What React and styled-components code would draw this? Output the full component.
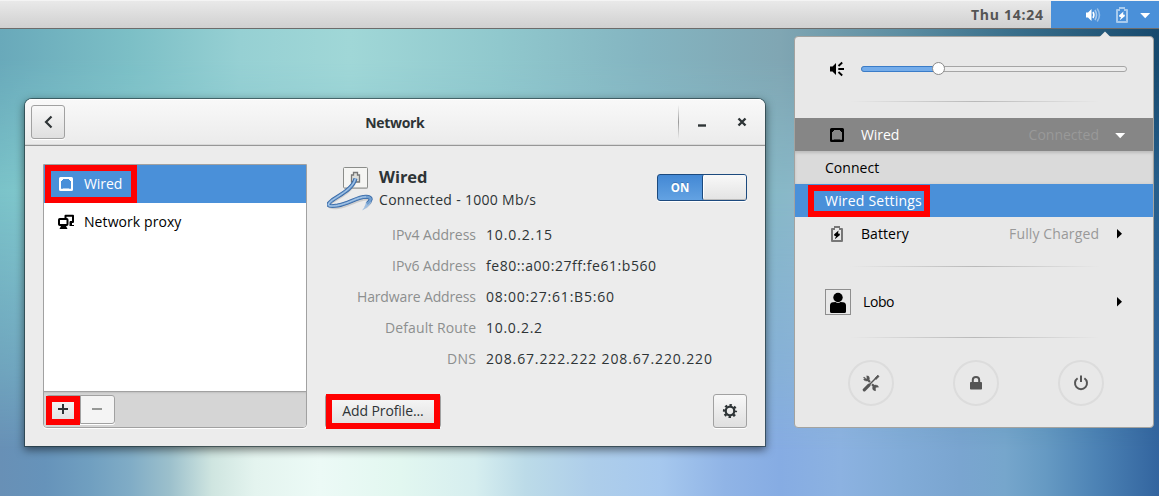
import React from "react";
import styled, { createGlobalStyle, css } from "styled-components";

const Global = createGlobalStyle`
  * { box-sizing: border-box; }
  html, body { margin: 0; padding: 0; background: #fff; }
  body { overflow: hidden; }
  svg { display: block; flex: none; }
`;

const Desktop = styled.div`
  position: relative;
  width: 1159px;
  height: 496px;
  overflow: hidden;
  font-family: "Open Sans", "Noto Sans", sans-serif;
  font-size: 14px;
  line-height: 20px;
  color: #000;
  background: linear-gradient(90deg, #6890b6 0, #6693ba 45px, #709fc0 90px, #80acc6 130px, #9cc0cc 170px,
    #cfe5e0 212px, #e4f4ef 255px, #ecfaf6 320px, #e2f7f0 400px, #d6eeef 475px, #bcdbe8 525px, #aeceea 590px,
    #a6c8ee 660px, #90b4e6 725px, #86ace3 780px, #8cb2e1 840px, #82acd8 900px, #7aa5d0 960px,
    #76a6cc 1005px, #669ac3 1045px, #4d83b5 1095px, #33659f 1158px);
`;

const Wash = styled.div`
  position: absolute;
  inset: 0;
  background: linear-gradient(90deg, ${(p) => p.$stops});
  mask-image: linear-gradient(180deg, ${(p) => p.$fade});
`;

const Text = styled.span`
  white-space: nowrap;
  letter-spacing: ${(p) => p.$ls || 0}px;
  margin-right: ${(p) => -(p.$ls || 0)}px;
`;

/* top bar */
const TopBar = styled.header`
  position: relative;
  display: flex;
  justify-content: flex-end;
  height: 29px;
  border-top: 1px solid #f4f4f4;
  border-bottom: 1px solid #6d6c6b;
  background: linear-gradient(#e9e9e9, #d0d0d0);
`;
const Clock = styled.div`
  padding: 4px 8px 0 0;
  font-weight: 700;
  color: #555;
`;
const Tray = styled.div`
  display: flex;
  align-items: center;
  width: 108px;
  height: 27px;
  padding-left: 34px;
  gap: 13px;
  background: #4a90d9;
  svg:last-child {
    margin-left: -6px;
  }
`;

/* system menu */
const Menu = styled.section`
  position: absolute;
  left: 794px;
  top: 36px;
  width: 360px;
  height: 392px;
  border: 1px solid #a3a3a0;
  border-radius: 4px;
  background: #e8e8e8;
`;
const Pointer = styled.svg`
  position: absolute;
  left: 304px;
  top: -6px;
`;
const VolumeRow = styled.div`
  display: flex;
  align-items: center;
  gap: 16px;
  height: 64px;
  padding: 0 26px 0 34px;
`;
const Track = styled.div`
  position: relative;
  flex: 1;
  height: 6px;
  margin-top: -1px;
  border: 1px solid #a5a5a5;
  border-radius: 3px;
  background: #ececec;
`;
const Fill = styled.div`
  width: 77px;
  height: 6px;
  margin: -1px 0 0 -1px;
  border: 1px solid #3a7cc8;
  border-radius: 3px 0 0 3px;
  background: #74acea;
`;
const Knob = styled.div`
  position: absolute;
  left: 70px;
  top: -5px;
  width: 13px;
  height: 13px;
  border: 1px solid #8a8a8a;
  border-radius: 50%;
  background: #fff;
`;
const Separator = styled.div`
  width: 250px;
  height: 1px;
  margin: ${(p) => p.$m || "0"} auto;
  position: relative;
  left: 1px;
  background: linear-gradient(90deg, rgba(185, 185, 185, 0), #b9b9b9 50%, rgba(185, 185, 185, 0));
`;
const MenuRow = styled.div`
  display: flex;
  align-items: center;
  gap: 16px;
  height: ${(p) => p.$h || 33}px;
  padding: 0 25px 0 34px;
  ${(p) => p.$open && css`color: #fff; background: #868686;`}
`;
const Status = styled.div`
  margin-left: auto;
  margin-right: -3px;
  color: #999;
`;
const SubRow = styled.div`
  position: relative;
  display: flex;
  align-items: center;
  height: 33px;
  padding-left: 30px;
  background: ${(p) => (p.$active ? "#4a90d9" : "#dadada")};
  color: ${(p) => (p.$active ? "#fff" : "#000")};
  box-shadow: ${(p) => (p.$active ? "none" : "inset 0 3px 3px -1px #bdbdbd, inset 0 0 3px #c6c6c6")};
`;
const Avatar = styled.div`
  display: flex;
  width: 26px;
  height: 26px;
  margin: 0 -4px 0 -4px;
  border: 1px solid #8e8e8e;
  align-items: flex-end;
  justify-content: center;
`;
const Actions = styled.div`
  display: flex;
  justify-content: space-between;
  padding: 22px 49px 0 53px;
`;
const Round = styled.div`
  display: flex;
  align-items: center;
  justify-content: center;
  width: 46px;
  height: 46px;
  border: 2px solid #dcdcdc;
  border-radius: 50%;
`;

/* network window */
const Window = styled.main`
  position: absolute;
  left: 24px;
  top: 98px;
  width: 742px;
  height: 349px;
  border: 1px solid rgba(30, 50, 55, 0.6);
  border-radius: 8px 8px 0 0;
  background: #ececec;
  background-clip: padding-box;
  box-shadow: 0 3px 9px rgba(0, 0, 0, 0.5);
  color: #2e3436;
`;
const TitleBar = styled.div`
  display: grid;
  grid-template-columns: 1fr auto 1fr;
  align-items: center;
  height: 47px;
  padding: 0 6px;
  border-bottom: 1px solid #979797;
  border-radius: 7px 7px 0 0;
  background: linear-gradient(#f9f9f9, #ebebeb);
  box-shadow: inset 0 -1px #d9d9d9, inset 0 1px #fff;
`;
const Title = styled.h1`
  margin: 2px 0 0;
  font-size: 14px;
  line-height: 20px;
`;
const Controls = styled.div`
  display: flex;
  justify-content: flex-end;
  align-items: center;
  height: 34px;
`;
const Rule = styled.div`
  width: 1px;
  height: 34px;
  background: linear-gradient(rgba(150, 150, 150, 0), #999 50%, rgba(150, 150, 150, 0));
`;
const Button = styled.div`
  position: relative;
  display: flex;
  align-items: center;
  justify-content: center;
  width: ${(p) => p.$w || 34}px;
  height: ${(p) => p.$h || 34}px;
  border: 1px solid #a1a1a1;
  border-radius: ${(p) => p.$r || "3px"};
  background: ${(p) => (p.$off ? "#f4f4f4" : "linear-gradient(#f8f8f8, #dfdfdf)")};
  box-shadow: 0 1px #fff;
`;
const Body = styled.div`
  display: flex;
  gap: 20px;
  padding: 18px;
  height: 300px;
`;
const Sidebar = styled.div`
  display: flex;
  flex-direction: column;
  width: 264px;
  height: 264px;
  border: 1px solid #a1a1a1;
  border-radius: 0 0 4px 4px;
  background: #fff;
  box-shadow: 0 1px #fff;
  color: #000;
`;
const Device = styled.div`
  position: relative;
  display: flex;
  align-items: center;
  gap: 10px;
  height: 38px;
  padding-left: 14px;
  ${(p) => p.$active && css`color: #fff; background: #4a90d9;`}
`;
const ListTools = styled.div`
  position: relative;
  display: flex;
  margin-top: auto;
  height: 36px;
  padding: 3px 0 0 2px;
  border-top: 1px solid #a1a1a1;
  border-radius: 0 0 3px 3px;
  background: #d5d5d5;
  box-shadow: inset 0 2px 2px -1px #c0c0c0;
  ${Button} + ${Button} {
    margin-left: -1px;
  }
  ${Button} svg {
    margin: 0 1px 2px 0;
  }
`;
const Detail = styled.div`
  display: flex;
  flex-direction: column;
  flex: 1;
  height: 264px;
`;
const DeviceHead = styled.div`
  display: flex;
  height: 61px;
`;
const HeadText = styled.div`
  display: flex;
  flex-direction: column;
  margin: 1px 0 0 4px;
`;
const DeviceName = styled.h2`
  margin: 0 0 1px;
  font-size: 16.5px;
  line-height: 24px;
`;
const Switch = styled.div`
  display: flex;
  width: 90px;
  height: 27px;
  margin: 10px 0 0 auto;
  border: 1px solid #1c4a7e;
  border-radius: 3px;
  background: linear-gradient(#4388d4, #63a2e2);
  box-shadow: 0 1px #fff;
`;
const SwitchLabel = styled.div`
  width: 44px;
  font-size: 11.5px;
  font-weight: 700;
  line-height: 26px;
  text-align: center;
  color: #fff;
  text-shadow: 0 -1px rgba(20, 60, 110, 0.35);
`;
const SwitchKnob = styled.div`
  flex: 1;
  border-left: 1px solid #1c4a7e;
  border-radius: 2px;
  background: linear-gradient(#f8f8f8, #e3e3e3);
  box-shadow: inset 0 -1px #bbb, inset 1px 0 #fff;
`;
const Facts = styled.dl`
  display: grid;
  grid-template-columns: 149px 1fr;
  gap: 11px 10px;
  margin: 0;
`;
const Term = styled.dt`
  text-align: right;
  color: #8c8f8f;
`;
const Value = styled.dd`
  margin: 0;
`;
const Footer = styled.div`
  display: flex;
  justify-content: space-between;
  height: 34px;
  margin: auto 0 0 -2px;
`;
const Highlight = styled.div`
  position: absolute;
  left: ${(p) => p.$x}px;
  top: ${(p) => p.$y}px;
  width: ${(p) => p.$w}px;
  height: ${(p) => p.$h}px;
  border: 6px solid #f00;
`;

const WiredIcon = ({ color }) => (
  <svg width="16" height="16" viewBox="0 0 16 16" fill={color}>
    <path
      fillRule="evenodd"
      d="M2.500 1h11A1.500 1.500 0 0 1 15 2.500v11a1.500 1.500 0 0 1-1.500 1.500h-11A1.500 1.500 0 0 1 1 13.500v-11A1.500 1.500 0 0 1 2.500 1zM5 3V4H4v1H3V12.800h10V5H12V4h-1V3z"
    />
    <path d="M5 12h6v.8H5z" opacity=".5" />
  </svg>
);
const ProxyIcon = () => (
  <svg width="16" height="16" viewBox="0 0 16 16">
    <path d="M7.500 4V1.800H15V8h-3" fill="none" stroke="#000" strokeWidth="2" strokeLinejoin="round" />
    <path d="M11.500 7.500H14V11h2v1h-4.500z" />
    <rect x="1" y="5" width="8.500" height="6" rx=".8" fill="#fff" stroke="#000" strokeWidth="2" />
    <path d="M3 12h5l1.500 3h-8z" />
  </svg>
);
const BatteryIcon = ({ shell, bolt }) => (
  <svg width="16" height="16" viewBox="0 0 16 16">
    <path
      fill={shell}
      fillRule="evenodd"
      d="M5 0h6v2h2a1 1 0 0 1 1 1v12a1 1 0 0 1-1 1H3a1 1 0 0 1-1-1V3a1 1 0 0 1 1-1h2zM4 4v10h8V4h-2V2H6v2z"
    />
    <path fill={bolt} d="M9.500 4.500 5 8.500 5.600 10H7l-1.200 3.300L11 9l-.6-1.500H9z" />
  </svg>
);
const MutedSpeaker = () => (
  <svg width="16" height="16" viewBox="0 0 16 16">
    <path d="M1 5.500h2.500L7 2v12l-3.500-3.500H1z" />
    <path d="M9.300 8H15M9.500 5l3.700-3.500M9.500 11l3.700 3.500" stroke="#000" strokeWidth="1.800" fill="none" />
  </svg>
);
const TrayVolume = () => (
  <svg width="16" height="16" viewBox="0 0 16 16" fill="none" stroke="#fff">
    <path d="M1 5.500h2L6.500 2v12L3 10.500H1z" fill="#fff" stroke="none" />
    <path d="M8 5q1.800 3 0 6" strokeWidth="1.600" />
    <path d="M10 3q3 5 0 10" strokeWidth="1.600" opacity=".5" />
    <path d="M12.200 1.500q4.500 6.500 0 13" strokeWidth="1.600" opacity=".4" />
  </svg>
);
const DownArrow = () => (
  <svg width="16" height="16" viewBox="0 0 16 16">
    <path d="M3.200 6h10L8.200 11.200z" fill="#fff" />
  </svg>
);
const RightArrow = () => (
  <svg width="16" height="16" viewBox="0 0 16 16">
    <path d="M5 3v9.500l5-4.800z" />
  </svg>
);
const UserIcon = () => (
  <svg width="18" height="22" viewBox="0 0 18 22">
    <circle cx="9" cy="5.500" r="4.700" />
    <path d="M1 13.500Q1 10.500 4 10.200L6.500 10q2.500 2 5 0l2.500.2q3 .3 3 3.300v6Q17 21 15.500 21h-13Q1 21 1 19.500z" />
  </svg>
);
const ToolsIcon = () => (
  <svg width="18" height="18" viewBox="0 0 18 18" fill="none" stroke="#555">
    <path d="M2.300 15.800 7 11.100" strokeWidth="3.200" strokeLinecap="round" />
    <path d="M7 11.100 14.500 3.500" strokeWidth="1.400" />
    <path d="M13 4.500 15.800 1.200 17 2.400 14.200 5.200z" fill="#555" strokeWidth="1" />
    <path d="M6.300 6.200 8 8M10 10.200l2.200 2.200" strokeWidth="2.200" />
    <path d="M4.200 1.900q3.300-.4 3.300 2.400 0 2.800-2.800 2.800Q2 7.100 1.500 5l2.800-.6z" fill="#555" strokeWidth=".4" />
    <path d="M4.300 1.200 4.800 4.600 1 4.900 1 2z" fill="#e8e8e8" stroke="none" opacity=".9" />
    <path d="M1.600 3.200 3.600 4.800" strokeWidth="1.300" />
    <path d="M13.800 16.700q-3.300 0-3.300-2.800 0-2.900 3-2.900 2.600 0 3.200 2.200l-2.800.6z" fill="#555" strokeWidth=".4" />
    <path d="M16.500 13.600 13.700 13.800 14 17 17.500 17z" fill="#e8e8e8" stroke="none" />
  </svg>
);
const LockIcon = () => (
  <svg width="16" height="16" viewBox="0 0 16 16">
    <path d="M4.800 8V4.800q0-2.800 3.200-2.800t3.200 2.800V8" fill="none" stroke="#555" strokeWidth="2" />
    <rect x="2" y="7" width="12" height="7.500" rx=".8" fill="#555" />
  </svg>
);
const PowerIcon = () => (
  <svg width="16" height="16" viewBox="0 0 16 16" fill="none" stroke="#555" strokeWidth="2">
    <path d="M4.600 3.200a6 6 0 1 0 6.800 0" />
    <path d="M8 .5V7" />
  </svg>
);
const GearIcon = () => (
  <svg width="16" height="16" viewBox="0 0 16 16" fill="none" stroke="#2e3436">
    <circle cx="8" cy="8" r="4.300" strokeWidth="2.300" />
    <circle cx="8" cy="8" r="6" strokeWidth="2.200" strokeDasharray="2.400 2.312" strokeDashoffset="1.200" />
  </svg>
);
const CableIcon = () => (
  <svg width="48" height="48" viewBox="0 0 48 48" fill="none">
    <rect x="17" y="4" width="24" height="21" rx="1" fill="#bbb" opacity=".7" />
    <rect x="16.500" y="3.500" width="24" height="20.500" rx="1" fill="#f5f5f3" stroke="#8b8d8a" />
    <path d="M24.500 18v-7h2V8.500h4V11h2v7z" fill="#deded9" stroke="#777" strokeWidth="1.300" />
    <path d="M28.500 16C26 26 17 31 6 37.500c-6 4-6 7 5 6C22 41.500 32 35 39 35c8 0 4 5-1 8.500" stroke="#999" strokeWidth="3" opacity=".35" />
    <path d="M28.500 14.500C26 24 16 29 5.500 36c-6.500 5-5.500 7 5 5.500C22 39.500 30 33 39 32.800c7.500.2 4.500 4.500 1 7.200" stroke="#3465a4" strokeWidth="4" />
    <path d="M44.500 37.500Q42 43 35 46.500q3.500-4 4-8z" fill="#9dbde0" />
    <path d="M28.500 14.500C26 24 16 29 5.500 36c-6.500 5-5.500 7 5 5.500C22 39.500 30 33 39 32.800c7.500.2 4.500 4.500 1 7.200" stroke="#729fcf" strokeWidth="2.400" />
    <path d="M28.500 14.500C26 24 16 29 5.500 36c-6.500 5-5.500 7 5 5.500C22 39.500 30 33 39 32.800" stroke="#b4d0ee" strokeWidth=".9" />
  </svg>
);

const facts = [
  { term: "IPv4 Address", value: "10.0.2.15", valueSpacing: 0.87 },
  { term: "IPv6 Address", value: "fe80::a00:27ff:fe61:b560", valueSpacing: 0.55 },
  { term: "Hardware Address", termSpacing: -0.14, value: "08:00:27:61:B5:60", valueSpacing: 0.78 },
  { term: "Default Route", termSpacing: 0.1, value: "10.0.2.2", valueSpacing: 0.71 },
  { term: "DNS", termSpacing: 0.3, value: "208.67.222.222 208.67.220.220", valueSpacing: 0.86 },
];

export default function App() {
  return (
    <>
      <Global />
      <Desktop>
        <Wash
          $stops="#7bc3c9 0, #80c8cc 30px, #8cc8cf 400px, #86b8c6 770px, #8ab8c8 795px, #4a85a5 1000px, #275f8c 1158px"
          $fade="#000 0, #000 190px, rgba(0,0,0,.75) 270px, rgba(0,0,0,.4) 370px, transparent 450px"
        />
        <Wash
          $stops="#69a9ba 0, #7cbfc6 130px, #96d0d3 240px, #a0d7d7 350px, #90c8cd 500px, #84b5c1 640px, #80a6b3 780px, #5d8ea2 900px, #3a708c 1010px, #174a6e 1158px"
          $fade="#000 0, #000 60px, rgba(0,0,0,.7) 100px, transparent 190px"
        />
        <TopBar>
          <Clock><Text $ls={0.73}>Thu 14:24</Text></Clock>
          <Tray>
            <TrayVolume />
            <BatteryIcon shell="#a8cbee" bolt="#fff" />
            <DownArrow />
          </Tray>
        </TopBar>

        <Window>
          <TitleBar>
            <Button>
              <svg width="16" height="16" viewBox="0 0 16 16">
                <path d="M11.500 2.500 6 8l5.500 5.500" fill="none" stroke="#2e3436" strokeWidth="2.200" />
              </svg>
            </Button>
            <Title><Text $ls={-0.35}>Network</Text></Title>
            <Controls>
              <Rule />
              <svg width="80" height="16" viewBox="0 0 80 16" stroke="#2e3436" fill="none">
                <path d="M19 11.500h8" strokeWidth="2.400" />
                <path d="M59.500 4.500l7 7M66.500 4.500l-7 7" strokeWidth="2.400" />
              </svg>
            </Controls>
          </TitleBar>
          <Body>
            <Sidebar>
              <Device $active>
                <WiredIcon color="#fff" />
                <Text $ls={-0.1}>Wired</Text>
                <Highlight $x={1} $y={0} $w={92} $h={38} />
              </Device>
              <Device>
                <ProxyIcon />
                <Text $ls={0.08}>Network proxy</Text>
              </Device>
              <ListTools>
                <Button $w={35} $h={29} $r="3px 0 0 3px">
                  <svg width="12" height="12" viewBox="0 0 12 12" stroke="#2e3436" strokeWidth="2">
                    <path d="M6 1v10M1 6h10" />
                  </svg>
                </Button>
                <Button $w={35} $h={29} $r="0 3px 3px 0" $off>
                  <svg width="12" height="12" viewBox="0 0 12 12" stroke="#969896" strokeWidth="2">
                    <path d="M1 6h10" />
                  </svg>
                </Button>
                <Highlight $x={2} $y={4} $w={34} $h={29} />
              </ListTools>
            </Sidebar>
            <Detail>
              <DeviceHead>
                <CableIcon />
                <HeadText>
                  <DeviceName><Text $ls={-0.05}>Wired</Text></DeviceName>
                  <Text $ls={0.31}>Connected - 1000 Mb/s</Text>
                </HeadText>
                <Switch>
                  <SwitchLabel><Text>ON</Text></SwitchLabel>
                  <SwitchKnob />
                </Switch>
              </DeviceHead>
              <Facts>
                {facts.map((f) => (
                  <React.Fragment key={f.term}>
                    <Term><Text $ls={f.termSpacing}>{f.term}</Text></Term>
                    <Value><Text $ls={f.valueSpacing}>{f.value}</Text></Value>
                  </React.Fragment>
                ))}
              </Facts>
              <Footer>
                <Button $w={116}>
                  <Text $ls={-0.1}>Add Profile...</Text>
                  <Highlight $x={0} $y={-1} $w={114} $h={35} />
                </Button>
                <Button><GearIcon /></Button>
              </Footer>
            </Detail>
          </Body>
        </Window>

        <Menu>
          <Pointer width="12" height="7" viewBox="0 0 12 7">
            <path d="M0 6.500 6 0.500 12 6.500V7H0z" fill="#e8e8e8" />
          </Pointer>
          <VolumeRow>
            <MutedSpeaker />
            <Track>
              <Fill />
              <Knob />
            </Track>
          </VolumeRow>
          <Separator $m="0 auto 16px" />
          <MenuRow $open>
            <WiredIcon color="#000" />
            <Text $ls={-0.1}>Wired</Text>
            <Status><Text>Connected</Text></Status>
            <DownArrow />
          </MenuRow>
          <SubRow><Text $ls={0.05}>Connect</Text></SubRow>
          <SubRow $active>
            <Text $ls={0.2}>Wired Settings</Text>
            <Highlight $x={13} $y={1} $w={122} $h={32} />
          </SubRow>
          <MenuRow>
            <BatteryIcon shell="#777" bolt="#000" />
            <Text $ls={0.05}>Battery</Text>
            <Status><Text $ls={0.12}>Fully Charged</Text></Status>
            <RightArrow />
          </MenuRow>
          <Separator $m="16px auto 0" />
          <MenuRow $h={70}>
            <Avatar><UserIcon /></Avatar>
            <Text $ls={-0.4}>Lobo</Text>
            <Status />
            <RightArrow />
          </MenuRow>
          <Separator />
          <Actions>
            <Round><ToolsIcon /></Round>
            <Round><LockIcon /></Round>
            <Round><PowerIcon /></Round>
          </Actions>
        </Menu>
      </Desktop>
    </>
  );
}
